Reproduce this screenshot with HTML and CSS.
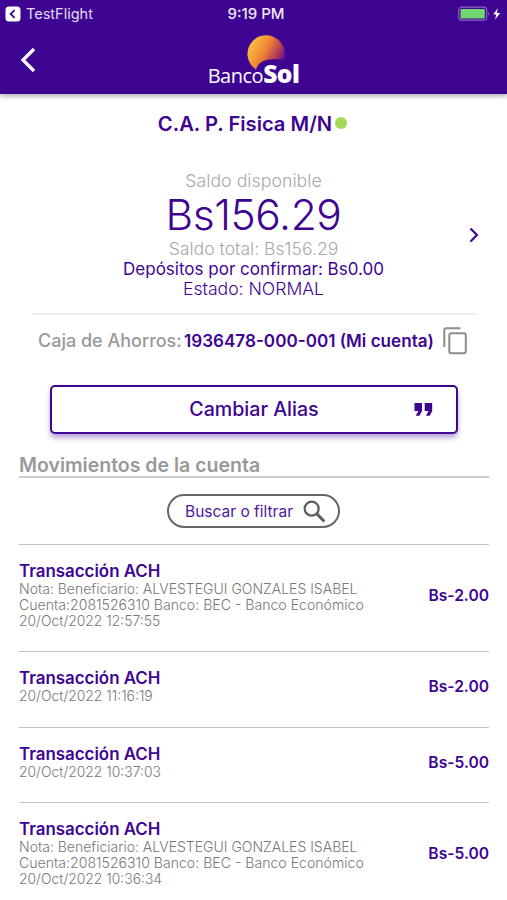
FILE: index.html
```html
<!DOCTYPE html>
<html lang="es">
<head>
    <meta charset="UTF-8">
    <meta name="viewport" content="width=device-width, initial-scale=1.0">
    <title>BancoSol</title>
    <link rel="stylesheet" href="styles.css">
</head>
<body>
    <header>
        <div class="status-bar">
            <div class="status-app">
                <svg width="16" height="16" viewBox="0 0 16 16"><rect x="0.5" y="0.5" width="15" height="15" rx="3.5" fill="#fff"/><path d="M9.6 4.2L5.6 8l4 3.8" fill="none" stroke="#3e0593" stroke-width="1.8"/></svg>
                <span>TestFlight</span>
            </div>
            <span class="clock">9:19 PM</span>
            <svg class="battery" width="44" height="16" viewBox="0 0 44 16">
                <rect x="0.7" y="1.2" width="28" height="13" rx="3.2" fill="none" stroke="#8a68bd" stroke-width="1.2"/>
                <rect x="2.5" y="3" width="24.3" height="9.4" rx="1" fill="#72d76f"/>
                <path d="M30 5.5q1.7 2.3 0 4.6z" fill="#8a68bd"/>
                <path d="M39.6 2.3L35.3 8.5h3l-1.3 5.2 5.2-6.8h-3.2z" fill="#fff"/>
            </svg>
        </div>
        <div class="nav-bar">
            <svg class="back" width="16" height="26" viewBox="0 0 16 26"><path d="M14 2L3 13l11 11" fill="none" stroke="#fff" stroke-width="3.3"/></svg>
            <div class="logo">
                <svg width="38" height="36" viewBox="0 0 38 36">
                    <defs>
                        <linearGradient id="sun" x1="0" y1="0.25" x2="1" y2="0.75">
                            <stop offset="0" stop-color="#fdc743"/>
                            <stop offset="0.45" stop-color="#ef8533"/>
                            <stop offset="0.75" stop-color="#b43d57"/>
                            <stop offset="1" stop-color="#4d0a8e"/>
                        </linearGradient>
                    </defs>
                    <path d="M9 34.5A18.6 18.6 0 1 1 36.8 24.5Q31 24.3 26 24.3Q12 24.5 9 34.5z" fill="url(#sun)"/>
                </svg>
                <div class="logo-text"><span class="logo-banco">Banco</span><span class="logo-sol">Sol</span></div>
            </div>
        </div>
    </header>
    <main>
        <h1><span>C.A. P. Fisica M/N</span><span class="dot"></span></h1>
        <section class="balance">
            <div class="balance-info">
                <p class="available">Saldo disponible</p>
                <p class="amount">Bs156.29</p>
                <p class="total">Saldo total: Bs156.29</p>
                <p class="deposits">Depósitos por confirmar: Bs0.00</p>
                <p class="state">Estado: NORMAL</p>
            </div>
            <svg class="next" width="10" height="16" viewBox="0 0 10 16"><path d="M1.5 1.5L8 8l-6.5 6.5" fill="none" stroke="#3e0593" stroke-width="2.2"/></svg>
        </section>
        <section class="account">
            <span class="account-type">Caja de Ahorros:</span>
            <span class="account-number">1936478-000-001 (Mi cuenta)</span>
            <svg width="25" height="28" viewBox="0 0 25 28" fill="none" stroke="#8d8d8d" stroke-width="2"><path d="M1.3 20V3.2q0-1.9 1.9-1.9H17.5"/><rect x="6.3" y="6.3" width="16.5" height="20" rx="2"/></svg>
        </section>
        <button class="alias-button">
            <span class="alias-label">Cambiar Alias</span>
            <svg width="19" height="13" viewBox="0 0 19 13" fill="#3e0593"><path d="M0.5 0h7.5v8L5.5 12.7H1.8L4.3 8H0.5z"/><path d="M10.7 0h7.5v8l-2.5 4.7H12L14.5 8H10.7z"/></svg>
        </button>
        <section class="movements">
            <h2>Movimientos de la cuenta</h2>
            <button class="search-button">
                <span>Buscar o filtrar</span>
                <svg width="23" height="23" viewBox="0 0 22 22" fill="none" stroke="#5e5e5e"><circle cx="8.3" cy="8.3" r="6.7" stroke-width="2.2"/><path d="M13 13l7.5 7.5" stroke-width="2.8"/></svg>
            </button>
            <ul>
                <li>
                    <div class="detail">
                        <h3>Transacción ACH</h3>
                        <p class="note">Nota: Beneficiario: ALVESTEGUI GONZALES ISABEL</p>
                        <p class="bank">Cuenta:2081526310 Banco: BEC - Banco Económico</p>
                        <p class="date">20/Oct/2022 12:57:55</p>
                    </div>
                    <span class="value">Bs-2.00</span>
                </li>
                <li>
                    <div class="detail">
                        <h3>Transacción ACH</h3>
                        <p class="date">20/Oct/2022 11:16:19</p>
                    </div>
                    <span class="value">Bs-2.00</span>
                </li>
                <li>
                    <div class="detail">
                        <h3>Transacción ACH</h3>
                        <p class="date">20/Oct/2022 10:37:03</p>
                    </div>
                    <span class="value">Bs-5.00</span>
                </li>
                <li>
                    <div class="detail">
                        <h3>Transacción ACH</h3>
                        <p class="note">Nota: Beneficiario: ALVESTEGUI GONZALES ISABEL</p>
                        <p class="bank">Cuenta:2081526310 Banco: BEC - Banco Económico</p>
                        <p class="date">20/Oct/2022 10:36:34</p>
                    </div>
                    <span class="value">Bs-5.00</span>
                </li>
            </ul>
        </section>
    </main>
</body>
</html>
```

FILE: styles.css
```css
* {
    box-sizing: border-box;
    margin: 0;
    padding: 0;
}

body {
    font-family: Inter, "Liberation Sans", sans-serif;
    background-color: #fff;
    color: #3e0593;
    height: 900px;
    overflow: hidden;
    white-space: nowrap;
}

header {
    height: 94px;
    background-color: #3e0593;
    color: #fff;
    box-shadow: 0 2px 5px rgba(0, 0, 0, 0.35);
}

.status-bar {
    display: grid;
    grid-template-columns: 1fr auto 1fr;
    align-items: center;
    height: 27px;
    padding: 0 5px;
}

.status-app {
    display: flex;
    align-items: center;
    gap: 5px;
    font-size: 14.5px;
    color: #e4dbf1;
}

.clock {
    margin-left: 5px;
    font-size: 15px;
    font-weight: 500;
    color: #efe9f7;
}

.battery {
    justify-self: end;
}

.nav-bar {
    display: grid;
    grid-template-columns: 1fr auto 1fr;
    height: 67px;
    padding: 0 20px;
}

.back {
    margin-top: 20px;
}

.logo {
    display: flex;
    flex-direction: column;
    align-items: center;
    width: 92px;
    padding-top: 8px;
}

.logo > svg {
    margin-left: 24px;
}

.logo-text {
    display: flex;
    align-items: baseline;
    line-height: 24px;
    margin-top: -9px;
}

.logo-banco {
    font-family: "Open Sans", sans-serif;
    font-size: 20px;
    letter-spacing: -0.5px;
}

.logo-sol {
    font-family: "Open Sans", sans-serif;
    font-size: 24.5px;
    font-weight: 800;
    letter-spacing: -0.5px;
}

h1 {
    display: flex;
    justify-content: center;
    align-items: center;
    gap: 3px;
    height: 58px;
    padding-right: 2px;
    font-size: 20.2px;
    font-weight: 600;
}

.dot {
    width: 12px;
    height: 12px;
    border-radius: 50%;
    background-color: #a2d957;
}

.balance {
    display: grid;
    grid-template-columns: 1fr auto;
    align-items: center;
    height: 163px;
    margin: 0 31px 0 32px;
    border-bottom: 2px solid #efefef;
}

.balance-info {
    padding-top: 4px;
    padding-left: 6px;
    text-align: center;
}

.next {
    margin-top: 5px;
    margin-right: -3px;
}

.available {
    font-size: 17.8px;
    font-weight: 300;
    line-height: 20px;
    color: #a9a9a9;
}

.amount {
    font-size: 42.5px;
    font-weight: 350;
    line-height: 48px;
    letter-spacing: -0.4px;
}

.total {
    font-size: 17.6px;
    font-weight: 300;
    line-height: 20px;
    color: #a9a9a9;
}

.deposits {
    font-size: 17px;
    line-height: 20px;
}

.state {
    font-size: 17.6px;
    font-weight: 300;
    line-height: 19px;
}

.account {
    display: flex;
    align-items: center;
    height: 51px;
    padding-left: 38px;
}

.account svg {
    margin-left: 8px;
}

.account-type {
    width: 146px;
    font-size: 18px;
    font-weight: 500;
    color: #999;
}

.account-number {
    width: 251px;
    font-size: 17.1px;
    font-weight: 600;
}

.alias-button {
    display: grid;
    grid-template-columns: 1fr auto 1fr;
    align-items: center;
    width: 408px;
    height: 49px;
    margin: 19px 0 0 50px;
    padding-bottom: 1px;
    border: 2.5px solid #3e0593;
    border-radius: 5px;
    background-color: #fff;
    box-shadow: 0 4px 5px rgba(62, 5, 147, 0.35);
    color: #3e0593;
    font-family: inherit;
    font-size: 19.6px;
    font-weight: 500;
}

.alias-label {
    grid-column: 2;
}

.alias-button svg {
    justify-self: end;
    margin-right: 23px;
}

.movements {
    padding: 20px 18px 0 19px;
}

h2 {
    height: 24px;
    border-bottom: 2px solid #ccc;
    font-size: 19.5px;
    font-weight: 600;
    line-height: 23px;
    color: #999;
}

.search-button {
    display: flex;
    align-items: center;
    justify-content: space-between;
    width: 173px;
    height: 34px;
    margin: 16px 0 15.5px 148px;
    padding: 0 12px 0 16px;
    border: 2px solid #666;
    border-radius: 17px;
    background-color: #fff;
    color: #4e18a0;
    font-family: inherit;
    font-size: 15.5px;
}

ul {
    list-style: none;
}

li {
    display: flex;
    justify-content: space-between;
    align-items: center;
    padding: 17px 0 22.6px;
    border-top: 1px solid #c4c4c4;
}

.detail {
    font-size: 14px;
    font-weight: 300;
    line-height: 16px;
    color: #777;
}

.bank {
    font-size: 14.1px;
}

.date {
    font-size: 13.9px;
}

h3 {
    font-size: 16.9px;
    font-weight: 600;
    line-height: 19px;
    color: #3e0593;
}

.value {
    font-size: 15.6px;
    font-weight: 600;
}
```
